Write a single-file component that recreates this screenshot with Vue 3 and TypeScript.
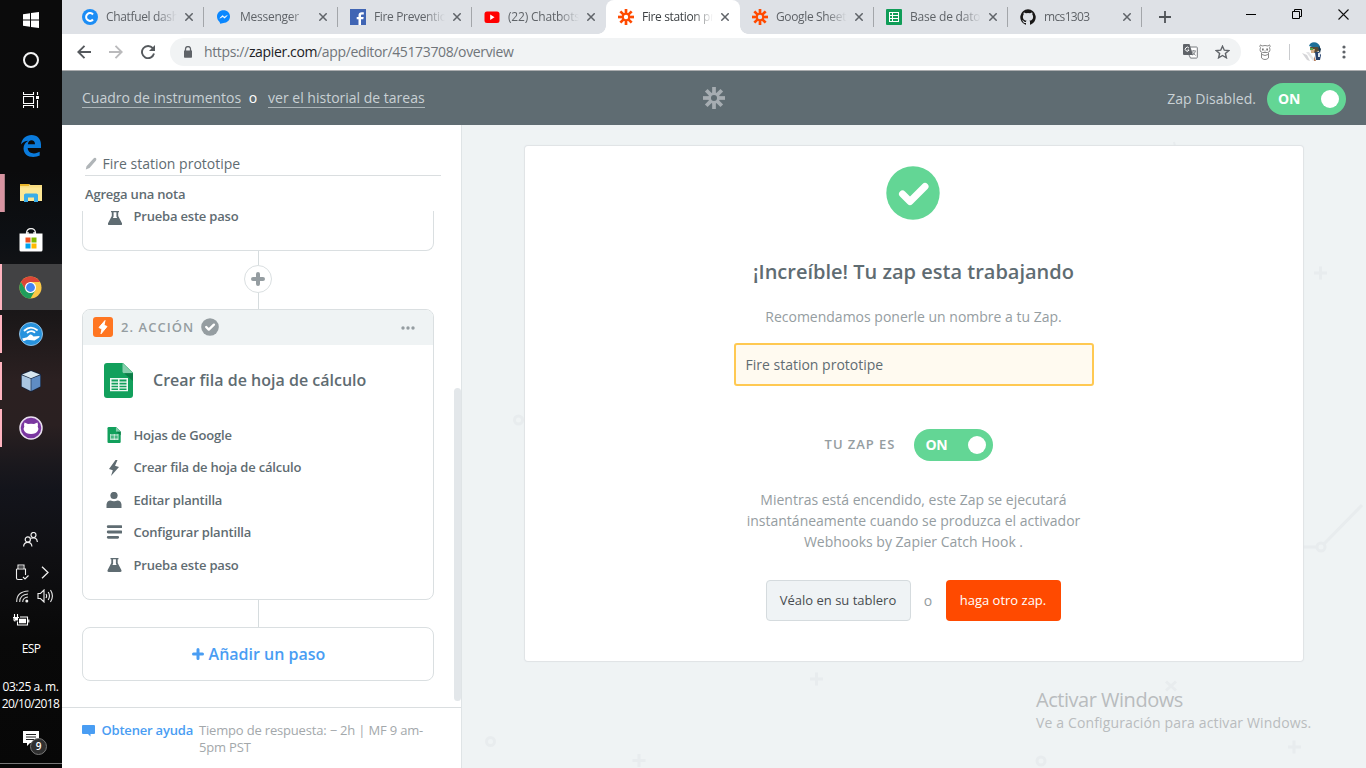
<script setup lang="ts">
interface Tab {
  title: string
  icon: string
  kind: string
  active?: boolean
  separator?: boolean
}

const tabs: Tab[] = [
  { title: 'Chatfuel dashboard', icon: 'chatfuel', kind: 't-chatfuel', separator: true },
  { title: 'Messenger', icon: 'messenger', kind: 't-messenger', separator: true },
  { title: 'Fire Prevention', icon: 'facebook', kind: 't-fire', separator: true },
  { title: '(22) Chatbots', icon: 'youtube', kind: 't-youtube' },
  { title: 'Fire station prototipe', icon: 'zapier', kind: 't-station', active: true },
  { title: 'Google Sheets', icon: 'zapier', kind: 't-google', separator: true },
  { title: 'Base de datos', icon: 'sheets', kind: 't-base', separator: true },
  { title: 'mcs1303', icon: 'github', kind: 't-mcs', separator: true },
]

const steps = [
  { icon: 'sheet', label: 'Hojas de Google' },
  { icon: 'bolt', label: 'Crear fila de hoja de cálculo' },
  { icon: 'user', label: 'Editar plantilla' },
  { icon: 'lines', label: 'Configurar plantilla' },
  { icon: 'flask', label: 'Prueba este paso' },
]

const spokes = [0, 45, 90, 135, 180, 225, 270, 315]
</script>

<template>
  <div class="screen">
    <svg class="defs" width="0" height="0">
      <defs>
        <g id="zapier-mark">
          <circle cx="8" cy="8" r="3.2" fill="none" stroke="currentColor" stroke-width="2" />
          <line v-for="a in spokes" :key="a" x1="8" y1="0" x2="8" y2="5" stroke="currentColor" stroke-width="2.7" :transform="`rotate(${a} 8 8)`" />
        </g>
        <g id="sheet-doc">
          <path d="M3 0H19L29 10V33a3 3 0 0 1-3 3H3a3 3 0 0 1-3-3V3a3 3 0 0 1 3-3z" fill="#12a05c" />
          <path d="M18.500 0L29 10.500H20a1.500 1.500 0 0 1-1.500-1.500z" fill="#87ceac" />
          <path d="M20 10.500h9v8z" fill="#0c7d47" />
          <path d="M6 15.500h18V29H6zM7.500 17v2h6.500v-2zm8 0v2h7v-2zm-8 3.300v1.700h6.500v-1.700zm8 0v1.700h7v-1.700zm-8 3v1.700h6.500v-1.700zm8 0v1.700h7v-1.700zm-8 2.900v1.500h6.500v-1.500zm8 0v1.500h7v-1.500z" fill="#eef8f2" fill-rule="evenodd" />
        </g>
        <g id="flask">
          <path d="M3 0h8v1.300h-.8V5L14 12.300q.5 1.700-1.200 1.700H1.200Q-.5 14 0 12.300L3.800 5V1.300H3zM5.600 1.300V5.400L4.900 7H9.100L8.400 5.400V1.300z" fill="#5f6c72" fill-rule="evenodd" />
        </g>
      </defs>
    </svg>

    <aside class="taskbar">
      <div class="sys"><svg width="16" height="16" viewBox="0 0 16 16"><path d="M0 2.300L7 1.300V7.500H0zM8 1.100L16 0V7.500H8zM0 8.500H7V14.700L0 13.700zM8 8.500H16V16L8 14.900z" fill="#fff" /></svg></div>
      <div class="sys"><svg width="18" height="18" viewBox="0 0 18 18"><circle cx="9" cy="9" r="7" fill="none" stroke="#f4f4f4" stroke-width="2" /></svg></div>
      <div class="sys"><svg width="16" height="16" viewBox="0 0 16 16"><path d="M.5 0v2.500h10V0M.5 16v-2.500h10V16M.5 4.500h10v7H.5zM14.500 0v3M14.500 8v8" fill="none" stroke="#fff" stroke-width="1.100" /><path d="M13 4h3v3h-3z" fill="#fff" /></svg></div>

      <div class="apps">
        <div class="app">
          <svg width="20" height="22" viewBox="0 0 20 22"><path d="M0 9.500C1 3.500 5 0 10.500 0C16.500 0 20 4.200 20 9.500V13H6.700C7 17 10 18.400 13 18.400C15.300 18.400 17.200 17.600 18.700 16.800V20.600C17 21.500 14.700 22 12.200 22C6.400 22 2.700 18.500 2.500 13.500C2.500 10 4.500 7.200 7.400 5.800C4.300 5.800 1.500 7.300 0 9.500zM6.900 9.200H14C14 6.500 12.500 5.300 10.500 5.300C8.600 5.300 7.100 6.700 6.900 9.200z" fill="#0a7bdc" fill-rule="evenodd" /></svg>
        </div>
        <div class="app open multi">
          <svg width="22" height="18" viewBox="0 0 22 18"><path d="M0 0h9l1.500 1H22v16H0z" fill="#f9dd82" /><path d="M0 0h9v2H0z" fill="#e9b429" /><path d="M1.500 3.500H22V17H0V3.500z" fill="#fde795" /><path d="M4 18V10.500L5.500 9.500H16.500L18 10.500V18h-4v-4.500H8V18z" fill="#3bade8" /></svg>
        </div>
        <div class="app">
          <svg width="24" height="24" viewBox="0 0 24 24"><path d="M7.500 6V5a4.500 4.500 0 0 1 9 0v1M9 6V4M15 6V4" fill="none" stroke="#eee" stroke-width="1.300" /><path d="M.5 5.500h23V22q0 1.500-1.500 1.500H2Q.5 23.500.5 22z" fill="#fff" /><path d="M6.500 9.500h5v5h-5z" fill="#f05022" /><path d="M12.500 9.500h5v5h-5z" fill="#7fb900" /><path d="M6.500 15.500h5v5h-5z" fill="#00a3ee" /><path d="M12.500 15.500h5v5h-5z" fill="#ffb900" /></svg>
        </div>
        <div class="app open current">
          <svg width="23" height="23" viewBox="0 0 24 24"><circle cx="12" cy="12" r="11.500" fill="#fbc846" /><path d="M2.040 6.250A11.500 11.500 0 0 1 21.960 6.250L12 6.250L7 15z" fill="#dc4637" /><path d="M2.040 6.250A11.500 11.500 0 0 0 12 23.500L17 14.900H7z" fill="#1f9d5c" /><circle cx="12" cy="12" r="5.800" fill="#fff" /><circle cx="12" cy="12" r="4.600" fill="#4384f3" /></svg>
        </div>
        <div class="app open">
          <svg width="24" height="24" viewBox="0 0 24 24"><circle cx="12" cy="12" r="11.500" fill="#2793de" stroke="#8fbde0" /><path d="M5.500 8.500Q11.500 3 18 8M8.500 10.500Q12 7.800 15.500 10.300" fill="none" stroke="#fff" stroke-width="1.800" stroke-linecap="round" /><path d="M8 15.200L11 12.600Q12 12 13 13L14.500 14.500L20.500 14Q21 15 19.500 16L15.500 18.500L8 17.800L4.500 19.200L3.200 16.500z" fill="#fff" /></svg>
        </div>
        <div class="app open">
          <svg width="22" height="24" viewBox="0 0 22 24"><path d="M11 1L21 5V18L11 23L1 18V5z" fill="#16243d" /><path d="M11 2L20 5.500L11 9.300L2 5.500z" fill="#d8e7f1" /><path d="M1.700 6.200L10.700 9.800V22L1.700 17.500z" fill="#a9c6e2" /><path d="M20.300 6.200L11.300 9.800V22L20.300 17.500z" fill="#5f8cc4" /></svg>
        </div>
        <div class="app open">
          <svg width="24" height="24" viewBox="0 0 24 24"><circle cx="12" cy="12" r="11" fill="#7a37a0" stroke="#e9e0ef" stroke-width="1.500" /><path d="M5.500 6.500L9 8Q12 7.400 15 8L18.500 6.500Q19.300 9 18.700 10.500Q20 12.500 18.700 15Q17 18 12 18Q7 18 5.300 15Q4 12.500 5.300 10.500Q4.700 9 5.500 6.500z" fill="#fff" /></svg>
        </div>
      </div>

      <div class="tray">
        <div class="tray-row people"><svg width="15" height="15" viewBox="0 0 15 15"><g fill="none" stroke="#eee" stroke-width="1.200"><circle cx="4.800" cy="7.400" r="2.600" /><path d="M.6 14.500Q.8 10.300 4.800 10.300Q8.700 10.300 8.900 14.500" /><circle cx="10.500" cy="3" r="2.500" /><path d="M8 6.300Q13.800 4.500 14.400 10" /></g></svg></div>
        <div class="tray-row usb">
          <svg width="14" height="17" viewBox="0 0 14 17"><path d="M3 5V1h6v4M1.500 5h9v6M1.500 5v9q0 1.500 1.500 1.500h4.500M8 13l2 2 3.500-3.500M5 2.500v1M7 2.500v1" fill="none" stroke="#eee" stroke-width="1.100" /></svg>
          <svg width="9" height="13" viewBox="0 0 9 13"><path d="M1 .8L7 6.500L1 12.200" fill="none" stroke="#eee" stroke-width="1.300" /></svg>
        </div>
        <div class="tray-row wifi">
          <svg width="14" height="13" viewBox="0 0 14 13"><path d="M.7 12Q.5 1.500 12.500 1M3.700 12Q3.800 4.500 12 4M6.700 12Q6.800 7.500 12 7" fill="none" stroke="#ddd" stroke-width="1.100" /><circle cx="10.800" cy="11" r="1.500" fill="#eee" /></svg>
          <svg width="17" height="14" viewBox="0 0 17 14"><path d="M1 4.500h2.500L7 1v12L3.500 9.500H1zM9 5q1.300 2 0 4M11.200 3q2.500 4 0 8M13.500 1q3.800 6 0 12" fill="none" stroke="#eee" stroke-width="1.100" /></svg>
        </div>
        <div class="tray-row battery"><svg width="17" height="12" viewBox="0 0 17 12"><path d="M1.500 0v3M4.500 0v3M0 3.500h6M1 4v2q0 1 1.500 1M4.500 7.500v3.500h10v-8H7M15.800 5.500v3" fill="none" stroke="#fff" stroke-width="1.100" /><path d="M6 4.800h7v4.500H6zM1 3.500h4V6.500H2z" fill="#fff" /></svg></div>
        <div class="lang"><span>ESP</span></div>
        <div class="clock"><span class="time">03:25 a. m.</span><span class="date">20/10/2018</span></div>
        <div class="notify">
          <svg width="16" height="15" viewBox="0 0 16 15"><path d="M0 0h16v12H7L4 15v-3H0z" fill="#fff" /><path d="M3 3.500h10M3 6h10M3 8.500h8" stroke="#222" stroke-width="1" /></svg>
          <span class="badge">9</span>
        </div>
        <div class="edge"></div>
      </div>
    </aside>

    <main class="window">
      <div class="tabstrip">
        <div v-for="(tab, i) in tabs" :key="i" class="tab" :class="{ active: tab.active, separator: tab.separator }">
          <svg class="favicon" width="16" height="16" viewBox="0 0 16 16">
            <template v-if="tab.icon === 'chatfuel'"><circle cx="8" cy="8" r="8" fill="#1c8df5" /><path d="M11 5.500A3.900 3.900 0 1 0 11 10.500" fill="none" stroke="#fff" stroke-width="2" /></template>
            <template v-else-if="tab.icon === 'messenger'"><path d="M7.500 1.200C11.200 1.200 14 3.900 14 7.600C14 11.300 11.200 14 7.500 14L4.200 14.800L3.600 13C1.900 11.700 1 9.800 1 7.600C1 3.900 3.800 1.200 7.500 1.200z" fill="#0a87ff" /><path d="M3.800 9.200L6.500 6.400L8.300 7.900L11.300 6.400L8.600 9.200L6.800 7.700z" fill="#fff" stroke="#fff" stroke-width=".5" /></template>
            <template v-else-if="tab.icon === 'facebook'"><path d="M0 0h16v16H0z" fill="#4065b4" /><path d="M8.500 16V10.300H6.700V8h1.800V6.300C8.500 4.300 9.800 3.300 11.700 3.300H13.800V5.600H12.300C11.300 5.600 11 6 11 6.800V8h2.700l-.4 2.300H11V16z" fill="#fff" /></template>
            <template v-else-if="tab.icon === 'youtube'"><rect x=".5" y="2.500" width="15" height="11.500" rx="2.500" fill="#f00" /><path d="M6.200 5.500L10.500 8.200L6.200 11z" fill="#fff" /></template>
            <use v-else-if="tab.icon === 'zapier'" href="#zapier-mark" color="#ff4a00" />
            <template v-else-if="tab.icon === 'sheets'"><rect width="16" height="16" rx="1" fill="#109d58" /><path d="M3 3h10v10H3zM4 4v2h2V4zm3 0v2h5V4zM4 7v2h2V7zm3 0v2h5V7zm-3 3v2h2v-2zm3 0v2h5v-2z" fill="#fff" fill-rule="evenodd" /></template>
            <path v-else d="M8 .2a8 8 0 0 0-2.500 15.500c.4.100.5-.2.500-.4v-1.400c-2.200.5-2.700-1-2.700-1-.4-.900-.9-1.200-.9-1.200-.7-.5.100-.5.100-.5.800.1 1.200.8 1.200.8.700 1.300 1.900.9 2.300.7.100-.5.300-.9.500-1.100-1.800-.2-3.600-.9-3.600-3.900 0-.9.300-1.600.8-2.200-.1-.2-.4-1 .1-2.100 0 0 .7-.2 2.200.8a7.500 7.500 0 0 1 4 0c1.500-1 2.200-.8 2.200-.8.400 1.100.2 1.900.1 2.100.5.600.8 1.300.8 2.200 0 3.100-1.900 3.700-3.700 3.900.3.300.6.700.6 1.500v2.200c0 .2.100.5.500.4A8 8 0 0 0 8 .2z" fill="#191717" />
          </svg>
          <span class="title"><span :class="tab.kind">{{ tab.title }}</span></span>
          <svg class="close" width="8" height="8" viewBox="0 0 8 8"><path d="M.3.300l7.400 7.400M7.700.3l-7.400 7.400" stroke="#5f6368" stroke-width="1.500" /></svg>
        </div>
        <svg class="newtab" width="12" height="12" viewBox="0 0 12 12"><path d="M6 0v12M0 6h12" stroke="#4f5357" stroke-width="1.800" /></svg>
        <div class="controls">
          <svg width="10" height="10" viewBox="0 0 10 10"><path d="M0 5.500h10" stroke="#000" /></svg>
          <svg width="10" height="10" viewBox="0 0 10 10"><path d="M.5 2.500h7v7h-7zM2.500 2.500v-2h7v7h-2" fill="none" stroke="#000" /></svg>
          <svg width="11" height="11" viewBox="0 0 11 11"><path d="M.5.5l10 10M10.500.5l-10 10" stroke="#111" stroke-width="1.100" /></svg>
        </div>
      </div>

      <div class="toolbar">
        <svg class="nav back" width="14" height="14" viewBox="0 0 14 14"><path d="M14 7H1.500M7.500 .8L1.300 7l6.200 6.200" fill="none" stroke="#55595d" stroke-width="1.900" /></svg>
        <svg class="nav forward" width="14" height="14" viewBox="0 0 14 14"><path d="M0 7h12.500M6.500 .8L12.700 7l-6.200 6.200" fill="none" stroke="#bababc" stroke-width="1.900" /></svg>
        <svg class="nav reload" width="14" height="14" viewBox="0 0 14 14"><path d="M11.800 3.200A6.100 6.100 0 1 0 13 8.600" fill="none" stroke="#55595d" stroke-width="1.900" /><path d="M14 0v6H8z" fill="#55595d" /></svg>
        <div class="omnibox">
          <svg width="8" height="12" viewBox="0 0 8 12"><path d="M1.500 5V3a2.500 2.500 0 0 1 5 0v2" fill="none" stroke="#5f6368" stroke-width="1.300" /><path d="M0 4.500h8V11q0 .7-.7.7H.7Q0 11.700 0 11z" fill="#5f6368" /></svg>
          <span class="url">https://<b>zapier.com</b>/app/editor/45173708/overview</span>
          <svg class="translate" width="15" height="15" viewBox="0 0 15 15"><path d="M6 3h7.500q.8 0 .8.800v9.500q0 .8-.8.800H7.500L6 11" fill="#fff" stroke="#777b7f" /><path d="M1 0h5.500L10 11H1q-1 0-1-1V1q0-1 1-1z" fill="#5f6368" /><path d="M6 4.200A2 2 0 1 0 6.100 6H4.500" fill="none" stroke="#fff" /><path d="M8.500 7h4.500M10.800 6v1M9 7.500l3.500 4M12.300 7.500Q11.500 10 9.500 11" stroke="#777b7f" fill="none" stroke-width=".9" /></svg>
          <svg class="star" width="15" height="14" viewBox="0 0 15 14"><path d="M7.500 1.200L9.300 5.200L13.700 5.600L10.400 8.500L11.400 12.800L7.500 10.500L3.600 12.800L4.600 8.500L1.300 5.600L5.700 5.200z" fill="none" stroke="#5f6368" stroke-width="1.400" /></svg>
        </div>
        <svg class="panda" width="12" height="16" viewBox="0 0 12 16"><g fill="none" stroke="#8a8a8a" stroke-width="1"><path d="M3 2Q1-.5.800 2.500L1.500 3.500Q0 8 3.500 8.500H8.500Q12 8 10.500 3.500L11.200 2.500Q11-.5 9 2Q6 1 3 2z" /><path d="M2.500 9v5q1.500 1.500 3.500 1.500T9.500 14V9M3 10.500q3 2 6 0" /></g><path d="M3 4.500h1.700v2H3zM7.300 4.500H9v2H7.300zM5.500 6.500h1v1h-1z" fill="#777" /></svg>
        <span class="divider"></span>
        <svg class="avatar" width="20" height="20" viewBox="0 0 20 20"><path d="M0 11l5 7 3 1-3-6z" fill="#d5d5d8" /><path d="M4 10l7 9 2-1-6-8z" fill="#e5e5e7" /><path d="M7 4Q8 .5 12 .3Q16.500.5 18 4.500L17 8L10 5z" fill="#1d6f98" /><path d="M17 4l2 3-1 4-2-3z" fill="#1b3850" /><path d="M8 5l8 0 1 4-5 2-3-2z" fill="#5a4b34" /><path d="M9 7h4l-1 4h-3z" fill="#d8b08a" /><path d="M8 6h3v2H8z" fill="#5da54b" /><path d="M13 10l4 0 2 3-1 5h-4z" fill="#28426c" /><path d="M16 11h2v4h-2z" fill="#dce3ea" /><path d="M12 14l2 5h-2z" fill="#b47b5a" /></svg>
        <svg class="more" width="4" height="14" viewBox="0 0 4 14"><circle cx="2" cy="2" r="1.600" fill="#5f6368" /><circle cx="2" cy="7" r="1.600" fill="#5f6368" /><circle cx="2" cy="12" r="1.600" fill="#5f6368" /></svg>
      </div>

      <header class="appbar">
        <nav class="crumbs"><a class="c1">Cuadro de instrumentos</a><span>o</span><a class="c2">ver el historial de tareas</a></nav>
        <svg class="brand" width="22" height="22" viewBox="0 0 16 16" color="#a6adb2"><use href="#zapier-mark" /></svg>
        <div class="status"><span>Zap Disabled.</span><div class="toggle"><b>ON</b><i></i></div></div>
      </header>

      <div class="editor">
        <section class="steps">
          <div class="zap-title">
            <svg width="12" height="13" viewBox="0 0 12 13"><path d="M8.300 1.800Q9.600.2 10.800 1T11 3.500L4.500 11L.8 12.600L1.500 9.200z" fill="#b0b5b8" /></svg>
            <span>Fire station prototipe</span>
          </div>
          <div class="note"><span>Agrega una nota</span></div>
          <div class="flow">
            <div class="card previous"><svg width="14" height="14" viewBox="0 0 14 14"><use href="#flask" /></svg><span class="s4">Prueba este paso</span></div>
            <div class="link short"></div>
            <div class="plus"><svg width="14" height="14" viewBox="0 0 14 14"><path d="M7 2v10M2 7h10" stroke="#959da1" stroke-width="4" stroke-linecap="round" /></svg></div>
            <div class="link mid"></div>
            <div class="card action">
              <div class="card-head">
                <svg width="20" height="20" viewBox="0 0 20 20"><rect width="20" height="20" rx="3" fill="#ff7622" /><path d="M12 3.500L6 10.500L9 12L8 16.800L14 9.500L11 8.200z" fill="#fff" stroke="#fff" stroke-width="1" /></svg>
                <span class="kind">2. ACCIÓN</span>
                <svg class="done" width="18" height="18" viewBox="0 0 18 18"><circle cx="9" cy="9" r="8.800" fill="#959da1" /><path d="M5.200 9l2.600 2.600L12.900 6.700" fill="none" stroke="#fff" stroke-width="2.400" stroke-linecap="round" stroke-linejoin="round" /></svg>
                <svg class="dots" width="14" height="4" viewBox="0 0 14 4"><circle cx="2" cy="2" r="1.700" fill="#959da1" /><circle cx="7" cy="2" r="1.700" fill="#959da1" /><circle cx="12" cy="2" r="1.700" fill="#959da1" /></svg>
              </div>
              <div class="card-name"><svg width="29" height="35" viewBox="0 0 29 36" preserveAspectRatio="none"><use href="#sheet-doc" /></svg><span>Crear fila de hoja de cálculo</span></div>
              <ul>
                <li v-for="(step, i) in steps" :key="i">
                  <svg width="16" height="16" viewBox="0 0 16 16">
                    <g v-if="step.icon === 'sheet'" transform="translate(1.500 0) scale(.455 .445)"><use href="#sheet-doc" /></g>
                    <path v-else-if="step.icon === 'bolt'" d="M9.500 0L3 9L6.800 10.300L5 16L13 6.900L9 5.800L11.500 0z" fill="#5f6c72" />
                    <g v-else-if="step.icon === 'user'" fill="#5f6c72"><circle cx="8" cy="3.500" r="3.600" /><path d="M.5 16V12.500Q1 8.500 4.500 8.500Q8 10 11.500 8.500Q15 8.500 15.500 12.500V16z" /></g>
                    <path v-else-if="step.icon === 'lines'" d="M2.200 2.700h13M2.200 8h13M2.200 13.300h9.500" stroke="#5f6c72" stroke-width="2.800" stroke-linecap="round" />
                    <use v-else href="#flask" x="1.500" y="1" />
                  </svg>
                  <span :class="`s${i}`">{{ step.label }}</span>
                </li>
              </ul>
            </div>
            <div class="link long"></div>
            <div class="card add"><svg width="12" height="12" viewBox="0 0 12 12"><path d="M6 1.500v9M1.500 6h9" stroke="#499df3" stroke-width="3" stroke-linecap="round" /></svg><span>Añadir un paso</span></div>
            <i class="scroll-thumb"></i>
          </div>
          <footer class="help">
            <svg width="13" height="12" viewBox="0 0 13 12"><path d="M1 0h11q1 0 1 1v7q0 1-1 1H8.500v2.500L6 9H1Q0 9 0 8V1Q0 0 1 0z" fill="#499df3" /></svg>
            <b>Obtener ayuda</b>
            <p>Tiempo de respuesta: − 2h | MF 9 am-<br />5pm PST</p>
          </footer>
        </section>

        <section class="canvas">
          <svg class="pattern" width="904" height="643" viewBox="462 125 904 643">
            <g fill="none" stroke="#e8ecee" stroke-width="3">
              <circle cx="518.500" cy="420" r="4" /><circle cx="490.500" cy="741.500" r="4" /><circle cx="1041" cy="761" r="4" />
              <circle cx="1321" cy="547" r="4" /><path d="M1303 547h13M1324 544L1362 505" />
              <path d="M632.500 760.500h13M639 754v13M810 679h13M816.500 672.500v13M1288 747h13M1294 740.500v13M1314 273h13M1320.500 266.500v13M1166 681.500l10 9M1176 681.500l-10 9" />
              <path d="M1174 142l1 4" stroke-width="2" />
            </g>
          </svg>
          <div class="panel">
            <svg class="success" width="54" height="54" viewBox="0 0 54 54"><circle cx="27" cy="27" r="26.700" fill="#63d695" /><path d="M16.500 28L24 35.500L39 20.500" fill="none" stroke="#fff" stroke-width="7" stroke-linecap="round" stroke-linejoin="round" /></svg>
            <h1><span>¡Increíble! Tu zap esta trabajando</span></h1>
            <p class="hint"><span>Recomendamos ponerle un nombre a tu Zap.</span></p>
            <div class="field"><span>Fire station prototipe</span></div>
            <div class="state"><span>TU ZAP ES</span><div class="toggle"><b>ON</b><i></i></div></div>
            <p class="about"><span class="a1">Mientras está encendido, este Zap se ejecutará</span><span class="a2">instantáneamente cuando se produzca el activador</span><span class="a3">Webhooks by Zapier Catch Hook .</span></p>
            <div class="buttons"><button class="secondary"><span>Véalo en su tablero</span></button><span class="or">o</span><button class="primary"><span>haga otro zap.</span></button></div>
          </div>
          <div class="watermark"><span class="w1">Activar Windows</span><span class="w2">Ve a Configuración para activar Windows.</span></div>
        </section>
      </div>
    </main>
  </div>
</template>

<style>
html, body { margin: 0; overflow: hidden; }
</style>

<style scoped>
* { box-sizing: border-box; }
.screen { display: flex; width: 1366px; height: 768px; overflow: hidden; font-family: "Open Sans", "Noto Sans", sans-serif; color: #5f6c72; font-size: 14px; white-space: nowrap; }
.defs { position: absolute; }
svg { display: block; flex: none; }
p, h1, ul { margin: 0; padding: 0; }

.taskbar { width: 62px; height: 768px; display: flex; flex-direction: column; flex: none; background: linear-gradient(#0b0b0b 0, #0b0b0c 170px, #0d1014 240px, #1a1718 315px, #2b2021 380px, #2a2021 425px, #1a181d 465px, #13141b 490px, #0f0f12 560px, #090909 640px, #070707 768px); }
.sys { height: 40px; display: flex; align-items: center; justify-content: center; }
.apps { padding-top: 3px; }
.app { height: 47px; padding-bottom: 1px; display: flex; align-items: center; justify-content: center; position: relative; padding-right: 1px; }
.app.open::before { content: ""; position: absolute; left: 0; top: 4px; width: 2px; height: 38px; background: #ffb3bf; }
.app.multi::before { width: 4px; border-right: 1px solid #a87b83; background: #d894a1; }
.app.current { height: 46px; margin-bottom: 1px; background: #424244; padding-bottom: 0; }
.app.current::before { top: 0; height: 46px; }
.tray { margin-top: 75px; display: flex; flex-direction: column; }
.tray-row { display: flex; align-items: center; }
.people { height: 25px; padding-left: 23px; }
.usb { height: 39px; padding: 2px 0 0 15px; gap: 12px; }
.wifi { height: 10px; padding-left: 16px; gap: 7px; }
.battery { height: 35px; padding: 2px 0 0 13px; }
.lang { height: 24px; line-height: 26px; text-align: center; color: #fff; font-size: 12px; }
.lang span { letter-spacing: -0.700px; }
.clock { margin-top: 18px; display: flex; flex-direction: column; align-items: center; line-height: 17px; color: #fff; font-size: 12px; padding-right: 1px; }
.time { letter-spacing: -0.450px; }
.date { letter-spacing: -0.600px; }
.notify { margin-top: 19px; margin-left: 23px; height: 32px; position: relative; }
.edge { border-top: 1px solid #777; }
.badge { position: absolute; left: 7px; top: 7px; width: 17px; height: 17px; border: 1px solid #777; border-radius: 50%; background: #303030; color: #fff; font-size: 10px; font-weight: 600; line-height: 14px; text-align: center; }

.window { width: 1304px; display: flex; flex-direction: column; }
.tabstrip { height: 34px; display: flex; background: #dee1e6; padding-left: 8px; font-size: 12px; color: #5f6368; }
.tab { width: 134px; height: 34px; display: flex; align-items: center; padding-left: 12px; position: relative; }
.tab.separator { border-right: 1px solid transparent; background: linear-gradient(#a3a6aa, #a3a6aa) right 0 top 7px / 1px 20px no-repeat; background-origin: border-box; }
.tab.active { width: 134px; background: #fff; border-radius: 8px 8px 0 0; color: #3c4043; z-index: 1; }
.tab.active::before, .tab.active::after { content: ""; position: absolute; bottom: 0; width: 8px; height: 8px; }
.tab.active::before { left: -8px; background: radial-gradient(circle at 0 0, transparent 7.500px, #fff 8px); }
.tab.active::after { right: -8px; background: radial-gradient(circle at 100% 0, transparent 7.500px, #fff 8px); }
.title { width: 71px; margin-left: 8px; overflow: hidden; line-height: 20px; mask-image: linear-gradient(90deg, #000 50px, transparent 71px); letter-spacing: -0.350px; }
.close { margin-left: 8px; }
.newtab { margin: 11px 0 0 17px; }
.controls { display: flex; gap: 36px; margin: 9px 0 0 auto; padding-right: 17px; }
.t-messenger { letter-spacing: -0.250px; }
.t-mcs { letter-spacing: -0.650px; }
.t-youtube, .t-base { letter-spacing: -0.200px; }

.toolbar { height: 37px; padding: 0 0 1px; display: flex; align-items: center; background: #fff; border-bottom: 1px solid #abadaf; }
.back { margin-left: 15px; }
.forward { margin-left: 18px; }
.reload { margin-left: 18px; }
.omnibox { margin-left: 15px; width: 1071px; height: 28px; display: flex; align-items: center; border-radius: 14px; background: #f1f3f4; padding: 0 11px 0 14px; font-size: 14px; color: #70757a; }
.url { margin-left: 12px; line-height: 20px; letter-spacing: -0.360px; }
.url b { font-weight: 400; color: #202124; }
.translate { margin-left: auto; }
.star { margin-left: 17px; }
.panda { margin-left: 18px; }
.divider { width: 1px; height: 16px; background: #c9cbce; margin-left: 18px; }
.avatar { margin-left: 12px; }
.more { margin-left: 20px; }

.appbar { height: 54px; background: #5f6c72; display: flex; align-items: center; position: relative; color: #c9d1d5; }
.crumbs { margin-left: 20px; display: flex; line-height: 18px; padding-top: 1px; }
.crumbs a { border-bottom: 1px solid #aab4b8; }
.crumbs span { margin: 0 11px 0 7.500px; color: #fff; }
.brand { margin-left: 278px; margin-top: -1px; }
.status { margin-left: auto; padding: 2px 20px 0 0; display: flex; align-items: center; gap: 11px; }
.status span { margin-top: -2px; letter-spacing: 0.040px; }
.toggle { width: 79px; height: 32px; border-radius: 16px; background: #63d695; display: flex; align-items: center; justify-content: space-between; padding: 0 7px 0 11px; color: #fff; font-size: 14px; }
.toggle b { font-weight: 700; margin-top: -2px; letter-spacing: -0.200px; }
.toggle i { width: 18px; height: 18px; border-radius: 50%; background: #fff; }

.editor { display: flex; height: 643px; }
.steps { width: 400px; background: #fff; border-right: 1px solid #dfe4e6; display: flex; flex-direction: column; }
.zap-title { height: 51px; margin: 0 20px 0 23px; border-bottom: 1px solid #dadee0; padding: 27px 0 0; display: flex; align-items: center; gap: 5.500px; }
.note { height: 35px; padding: 7px 0 0 23px; line-height: 22px; font-size: 13px; font-weight: 600; letter-spacing: -0.200px; }
.flow { height: 496px; position: relative; padding-left: 20px; overflow: hidden; }
.card { width: 352px; border: 1px solid #dadfe1; border-radius: 8px; overflow: hidden; }
.previous { height: 40px; border-top: 0; border-radius: 0 0 8px 8px; display: flex; padding-left: 24.500px; font-size: 13px; font-weight: 600; letter-spacing: -0.200px; }
.previous span { margin-left: 12px; line-height: 10px; }
.link { width: 1px; margin-left: 176px; background: #d6dcde; }
.short { height: 14px; }
.mid { height: 16px; }
.long { height: 27px; }
.plus { width: 28px; height: 28px; border: 1px solid #dadfe1; border-radius: 50%; margin-left: 162px; display: flex; align-items: center; justify-content: center; }
.action { height: 291px; }
.card-head { height: 35px; background: #eff3f4; display: flex; align-items: center; padding: 0 18px 1px 10px; font-size: 13px; font-weight: 600; color: #959da1; }
.kind { margin-left: 8px; letter-spacing: 1.050px; }
.done { margin-left: 7px; }
.dots { margin-left: auto; margin-top: 1px; }
.card-name { height: 70px; padding-left: 21px; display: flex; align-items: center; font-size: 16px; font-weight: 600; }
.card-name span { margin-left: 20px; }
ul { list-style: none; padding-top: 4px; font-size: 13px; font-weight: 600; letter-spacing: -0.190px; }
li { height: 32.400px; display: flex; align-items: center; padding-left: 23px; }
li span { margin-left: 11.500px; line-height: 20px; }
li .s1 { margin-top: -1px; }
.add { height: 54px; display: flex; align-items: center; justify-content: center; gap: 5px; padding-left: 1px; color: #499df3; font-size: 16px; font-weight: 600; }
.scroll-thumb { position: absolute; right: 0; top: 177px; width: 7px; height: 313px; border-radius: 4px; background: #e3e7ea; }
.help { height: 61px; border-top: 1px solid #dadee0; display: flex; padding: 14px 0 0 20px; font-size: 13px; line-height: 17px; }
.help svg { margin-top: 3px; }
.help b { margin-left: 6.500px; font-weight: 600; color: #499df3; letter-spacing: -0.200px; }
.help p { margin-left: 6px; color: #a3a8ab; letter-spacing: -0.180px; }

.canvas { width: 904px; background: #eff3f4; position: relative; padding: 21px 0 0 63px; }
.pattern { position: absolute; left: 0; top: 0; }
.panel { width: 778px; height: 515px; position: relative; background: #fff; border-radius: 3px; box-shadow: 0 0 1px 1px #dfe3e5; display: flex; flex-direction: column; align-items: center; padding: 20px 1px 0 0; }
.success { margin-right: 1px; }
h1 { margin-top: 37px; height: 30px; font-size: 20px; line-height: 30px; font-weight: 600; }
.hint { margin-top: 19px; line-height: 21px; color: #959da1; }
.field { margin: 16px -1px 0 0; width: 360px; height: 43px; border: 2px solid #ffc952; border-radius: 3px; background: #fffaf0; padding: 0 10px 0 9.500px; line-height: 39px; }
.state { margin-top: 43px; margin-right: 9px; display: flex; align-items: center; gap: 19px; color: #959da1; font-size: 13px; font-weight: 600; }
.state > span { letter-spacing: 0.950px; margin-top: -2px; }
.about { margin-top: 28px; display: flex; flex-direction: column; align-items: center; line-height: 21px; color: #959da1; }
.buttons { margin-top: 28px; margin-right: 1px; display: flex; align-items: center; color: #959da1; }
button { height: 41px; border-radius: 4px; font: 13px/20px "Open Sans", sans-serif; padding: 0 0 2px; }
.secondary { width: 145px; border: 1px solid #d5dbde; background: #eff3f5; color: #474c50; }
.primary { width: 115px; border: 0; background: #ff4a00; color: #fff; }
.or { width: 35px; text-align: center; }
.watermark { position: absolute; left: 574px; top: 563px; display: flex; flex-direction: column; color: #b9bcbe; }
.w1 { font-size: 20px; line-height: 24px; letter-spacing: -0.480px; }
.w2 { font-size: 14px; line-height: 22px; letter-spacing: 0.140px; }
</style>
